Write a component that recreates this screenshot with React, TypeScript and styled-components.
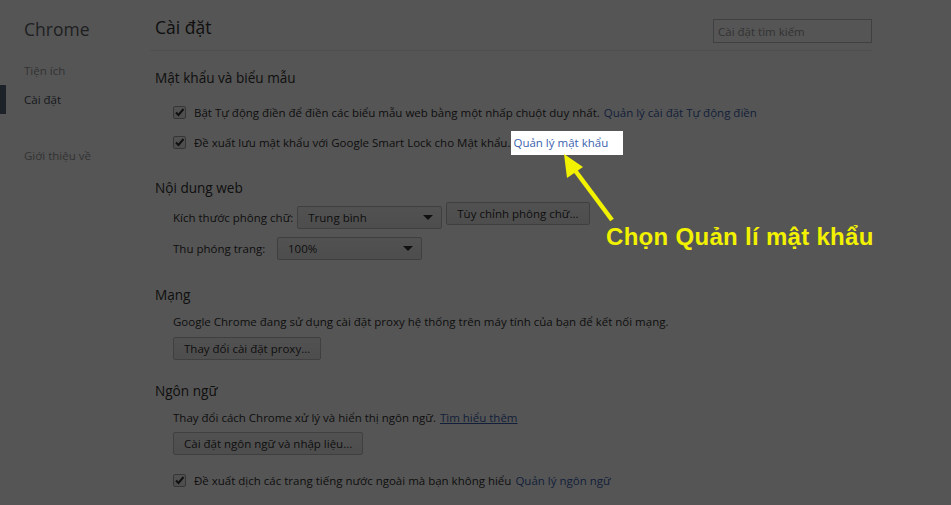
import React from "react";
import styled, { createGlobalStyle } from "styled-components";

const Global = createGlobalStyle`
  html, body { margin: 0; padding: 0; background: #fff; }
  body { font-family: "Open Sans", "Noto Sans", sans-serif; font-size: 11.5px; color: #303030; }
  #root { width: 951px; height: 505px; overflow: hidden; position: relative; }
`;

const Page = styled.div`
  display: flex;
  width: 951px;
  height: 505px;
`;

const Sidebar = styled.nav`
  width: 150px;
  flex: none;
  display: flex;
  flex-direction: column;
`;

const Logo = styled.h1`
  margin: 0;
  padding: 17px 0 0 24px;
  height: 50px;
  box-sizing: border-box;
  font-size: 17.5px;
  font-weight: 400;
  color: #5c6166;
`;

const NavList = styled.ul`
  list-style: none;
  margin: 6px 0 0;
  padding: 0;
`;

const NavItem = styled.li<{ $active?: boolean; $gap?: boolean }>`
  height: 29px;
  line-height: 29px;
  padding-left: 18px;
  border-left: 6px solid ${(p) => (p.$active ? "#58667a" : "transparent")};
  color: ${(p) => (p.$active ? "#464e5a" : "#999")};
  font-size: 11.5px;
  margin-top: ${(p) => (p.$gap ? "27px" : "0")};
`;

const Main = styled.main`
  width: 717px;
  padding-left: 5px;
  display: flex;
  flex-direction: column;
`;

const Header = styled.header`
  height: 51px;
  box-sizing: border-box;
  border-bottom: 1px solid #eee;
  display: flex;
  align-items: flex-start;
  justify-content: space-between;
  margin-left: -5px;
  padding-left: 5px;
`;

const Title = styled.h1`
  margin: 0;
  padding-top: 15px;
  font-size: 17.5px;
  font-weight: 400;
  color: #303030;
`;

const Search = styled.input`
  margin-top: 19px;
  width: 159px;
  height: 24px;
  box-sizing: border-box;
  border: 1px solid #bfbfbf;
  padding: 0 4px;
  font-family: inherit;
  font-size: 11.5px;
  color: #303030;
  outline: none;
  &::placeholder { color: #999; }
`;

const Section = styled.section`
  margin-top: 19px;
  &:first-of-type { margin-top: 15px; }
`;

const SectionTitle = styled.h3`
  margin: 0 0 2px;
  font-size: 13.6px;
  font-weight: 400;
  color: #303030;
  line-height: 24px;
`;

const Body = styled.div<{ $top?: number }>`
  padding-left: 18px;
  padding-top: ${(p) => p.$top ?? 0}px;
  display: flex;
  flex-direction: column;
`;

const CheckRow = styled.label<{ $mt?: number }>`
  display: flex;
  align-items: center;
  height: 30px;
  gap: 8px;
  margin-top: ${(p) => p.$mt ?? 0}px;
`;

const Box = styled.span`
  width: 13px;
  height: 13px;
  box-sizing: border-box;
  border: 1px solid #a0a0a0;
  border-radius: 2px;
  background: linear-gradient(#f5f5f5, #e6e6e6);
  display: inline-flex;
  align-items: center;
  justify-content: center;
  flex: none;
`;

const Link = styled.a<{ $underline?: boolean }>`
  color: #3b5fae;
  text-decoration: ${(p) => (p.$underline ? "underline" : "none")};
  margin-left: 4px;
`;

const HighlightLink = styled.a`
  position: relative;
  z-index: 3;
  background: #fff;
  color: #3b5fae;
  text-decoration: none;
  margin-left: 1px;
  padding: 4px 15px 5px 2px;
`;

const Row = styled.div`
  display: flex;
  align-items: center;
  gap: 4px;
  height: 31px;
`;

const Label = styled.span<{ $w?: number }>`
  min-width: ${(p) => p.$w ?? 0}px;
`;

const Select = styled.div<{ $w: number }>`
  width: ${(p) => p.$w}px;
  height: 23px;
  box-sizing: border-box;
  border: 1px solid #bcbcbc;
  border-radius: 2px;
  background: linear-gradient(#f4f4f4, #e8e8e8);
  display: flex;
  align-items: center;
  justify-content: space-between;
  padding: 0 8px 0 10px;
`;

const Caret = styled.span`
  width: 0;
  height: 0;
  border-left: 5px solid transparent;
  border-right: 5px solid transparent;
  border-top: 5px solid #303030;
`;

const Button = styled.button<{ $mt?: number }>`
  height: 23px;
  box-sizing: border-box;
  border: 1px solid #bcbcbc;
  border-radius: 2px;
  background: linear-gradient(#f4f4f4, #e8e8e8);
  padding: 0 10px;
  font-family: inherit;
  font-size: 11.5px;
  color: #303030;
  align-self: flex-start;
  flex: none;
  margin-top: ${(p) => p.$mt ?? 0}px;
`;

const Text = styled.div`
  height: 26px;
  line-height: 26px;
`;

const Overlay = styled.div`
  position: absolute;
  inset: 0;
  background: rgba(0, 0, 0, 0.667);
  z-index: 2;
`;

const Callout = styled.div`
  position: absolute;
  left: 606px;
  top: 223px;
  z-index: 4;
  font-family: "Liberation Sans", Arial, sans-serif;
  font-weight: 700;
  font-size: 24px;
  color: #f2f200;
  letter-spacing: 0.3px;
`;

const Arrow = styled.svg`
  position: absolute;
  left: 550px;
  top: 145px;
  z-index: 4;
`;

function Check() {
  return (
    <Box>
      <svg width="11" height="11" viewBox="0 0 11 11">
        <path d="M2 5.5 L4.5 8 L9.5 2" fill="none" stroke="#303030" strokeWidth="2" />
      </svg>
    </Box>
  );
}

export default function App() {
  return (
    <>
      <Global />
      <Page>
        <Sidebar>
          <Logo>Chrome</Logo>
          <NavList>
            <NavItem>Tiện ích</NavItem>
            <NavItem $active>Cài đặt</NavItem>
            <NavItem $gap>Giới thiệu về</NavItem>
          </NavList>
        </Sidebar>
        <Main>
          <Header>
            <Title>Cài đặt</Title>
            <Search placeholder="Cài đặt tìm kiếm" />
          </Header>
          <Section>
            <SectionTitle>Mật khẩu và biểu mẫu</SectionTitle>
            <Body $top={5}>
              <CheckRow>
                <Check />
                <span>
                  Bật Tự động điền để điền các biểu mẫu web bằng một nhấp chuột duy nhất.
                  <Link>Quản lý cài đặt Tự động điền</Link>
                </span>
              </CheckRow>
              <CheckRow>
                <Check />
                <span>
                  Đề xuất lưu mật khẩu với Google Smart Lock cho Mật khẩu.
                  <HighlightLink>Quản lý mật khẩu</HighlightLink>
                </span>
              </CheckRow>
            </Body>
          </Section>
          <Section>
            <SectionTitle>Nội dung web</SectionTitle>
            <Body>
              <Row>
                <Label>Kích thước phông chữ:</Label>
                <Select $w={145}>
                  Trung bình <Caret />
                </Select>
                <Button>Tùy chỉnh phông chữ...</Button>
              </Row>
              <Row>
                <Label $w={100}>Thu phóng trang:</Label>
                <Select $w={145}>
                  100% <Caret />
                </Select>
              </Row>
            </Body>
          </Section>
          <Section>
            <SectionTitle>Mạng</SectionTitle>
            <Body>
              <Text>Google Chrome đang sử dụng cài đặt proxy hệ thống trên máy tính của bạn để kết nối mạng.</Text>
              <Button $mt={2}>Thay đổi cài đặt proxy...</Button>
            </Body>
          </Section>
          <Section>
            <SectionTitle>Ngôn ngữ</SectionTitle>
            <Body>
              <Text>
                Thay đổi cách Chrome xử lý và hiển thị ngôn ngữ.
                <Link $underline>Tìm hiểu thêm</Link>
              </Text>
              <Button $mt={1}>Cài đặt ngôn ngữ và nhập liệu...</Button>
              <CheckRow $mt={10}>
                <Check />
                <span>
                  Đề xuất dịch các trang tiếng nước ngoài mà bạn không hiểu
                  <Link>Quản lý ngôn ngữ</Link>
                </span>
              </CheckRow>
            </Body>
          </Section>
        </Main>
      </Page>
      <Overlay />
      <Arrow width="80" height="90" viewBox="0 0 80 90">
        <line x1="62" y1="75" x2="24" y2="24" stroke="#f2f200" strokeWidth="4.5" />
        <polygon points="14,9 17,33 33,22" fill="#f2f200" />
      </Arrow>
      <Callout>Chọn Quản lí mật khẩu</Callout>
    </>
  );
}
